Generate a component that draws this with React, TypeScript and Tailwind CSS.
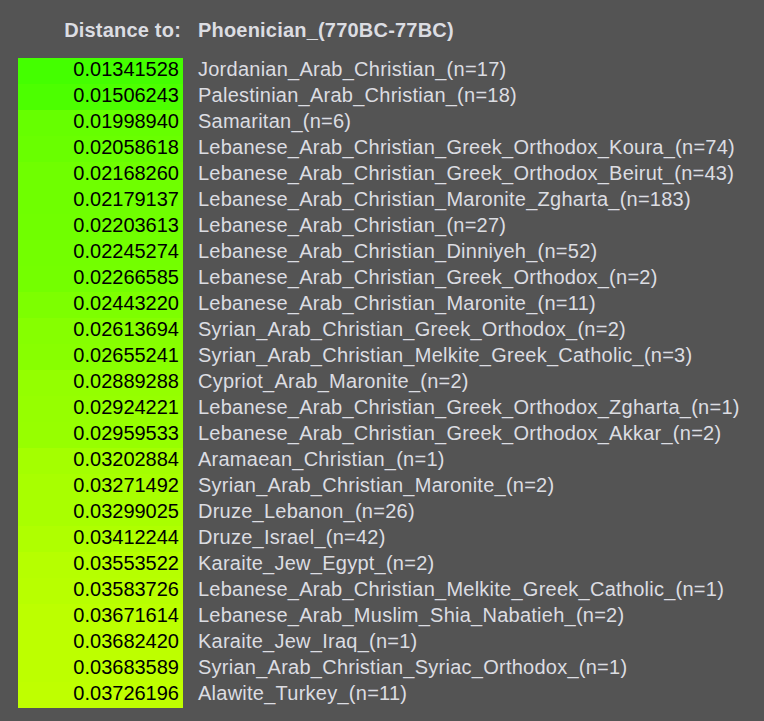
const target = "Phoenician_(770BC-77BC)";

const rows: [number, string][] = [
  [0.01341528, "Jordanian_Arab_Christian_(n=17)"],
  [0.01506243, "Palestinian_Arab_Christian_(n=18)"],
  [0.0199894, "Samaritan_(n=6)"],
  [0.02058618, "Lebanese_Arab_Christian_Greek_Orthodox_Koura_(n=74)"],
  [0.0216826, "Lebanese_Arab_Christian_Greek_Orthodox_Beirut_(n=43)"],
  [0.02179137, "Lebanese_Arab_Christian_Maronite_Zgharta_(n=183)"],
  [0.02203613, "Lebanese_Arab_Christian_(n=27)"],
  [0.02245274, "Lebanese_Arab_Christian_Dinniyeh_(n=52)"],
  [0.02266585, "Lebanese_Arab_Christian_Greek_Orthodox_(n=2)"],
  [0.0244322, "Lebanese_Arab_Christian_Maronite_(n=11)"],
  [0.02613694, "Syrian_Arab_Christian_Greek_Orthodox_(n=2)"],
  [0.02655241, "Syrian_Arab_Christian_Melkite_Greek_Catholic_(n=3)"],
  [0.02889288, "Cypriot_Arab_Maronite_(n=2)"],
  [0.02924221, "Lebanese_Arab_Christian_Greek_Orthodox_Zgharta_(n=1)"],
  [0.02959533, "Lebanese_Arab_Christian_Greek_Orthodox_Akkar_(n=2)"],
  [0.03202884, "Aramaean_Christian_(n=1)"],
  [0.03271492, "Syrian_Arab_Christian_Maronite_(n=2)"],
  [0.03299025, "Druze_Lebanon_(n=26)"],
  [0.03412244, "Druze_Israel_(n=42)"],
  [0.03553522, "Karaite_Jew_Egypt_(n=2)"],
  [0.03583726, "Lebanese_Arab_Christian_Melkite_Greek_Catholic_(n=1)"],
  [0.03671614, "Lebanese_Arab_Muslim_Shia_Nabatieh_(n=2)"],
  [0.0368242, "Karaite_Jew_Iraq_(n=1)"],
  [0.03683589, "Syrian_Arab_Christian_Syriac_Orthodox_(n=1)"],
  [0.03726196, "Alawite_Turkey_(n=11)"],
];

// red channel goes up with the distance, green stays full
function cellColor(v: number) {
  const min = rows[0][0];
  const max = rows[rows.length - 1][0];
  const r = Math.round(68 + ((v - min) / (max - min)) * 123);
  return `rgb(${r},255,0)`;
}

export default function App() {
  return (
    <div className="min-h-screen w-full bg-[#545454] pl-[18px] pt-[19px] font-['Liberation_Sans',Arial,sans-serif] text-[20px] text-[#dcdde2]">
      <div className="grid grid-cols-[165px_auto] gap-x-[15px]">
        <div className="pr-[2px] text-right font-bold leading-[22px] tracking-[0.2px]">Distance to:</div>
        <div className="font-bold leading-[22px] tracking-[0.2px]">{target}</div>
      </div>

      <div className="mt-[17px] grid grid-cols-[165px_auto] gap-x-[15px]">
        {rows.map(([v, name]) => (
          <div key={name} className="contents">
            <div
              className="h-[26px] pr-[4px] text-right leading-[22px] text-black"
              style={{ backgroundColor: cellColor(v) }}
            >
              {v.toFixed(8)}
            </div>
            <div className="h-[26px] whitespace-nowrap leading-[22px] tracking-[0.25px]">{name}</div>
          </div>
        ))}
      </div>
    </div>
  );
}
